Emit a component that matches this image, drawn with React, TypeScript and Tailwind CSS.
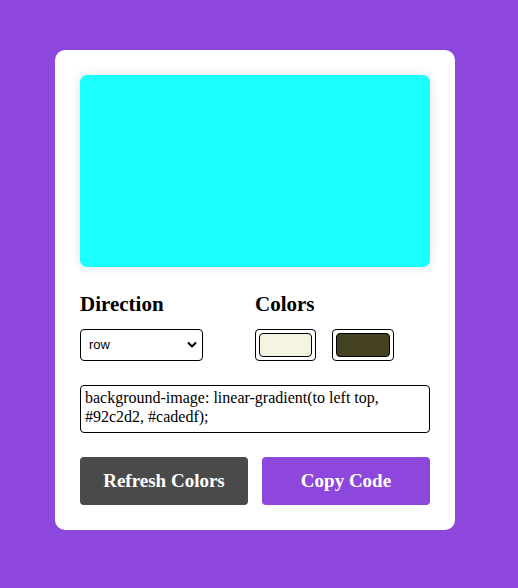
import React, { useState } from "react";

export default function App() {
  const [direction, setDirection] = useState("row");
  const code = "background-image: linear-gradient(to left top, #92c2d2, #cadedf);";

  return (
    <div
      className="min-h-[588px] w-full bg-[#8e47dd] flex justify-center pt-[50px] pr-[8px]"
      style={{ fontFamily: '"Liberation Serif", "Times New Roman", serif' }}
    >
      <div className="w-[400px] h-[480px] bg-white rounded-[10px] p-[25px] flex flex-col">
        <div className="h-[192px] w-full rounded-[7px] bg-[#1cffff] shadow-[0_0_12px_rgba(0,0,0,0.12)]" />

        <div className="mt-[25px] grid grid-cols-[175px_175px]">
          <div>
            <h2 className="text-[21px] font-bold leading-[24px] text-black">Direction</h2>
            <div className="relative mt-[13px] w-[123px] h-[32px]">
              <select
                value={direction}
                onChange={(e) => setDirection(e.target.value)}
                className="appearance-none w-full h-full border border-black rounded-[4px] bg-white pl-[8px] text-[13px] text-black outline-none"
                style={{ fontFamily: '"Liberation Sans", Arial, sans-serif' }}
              >
                <option value="row">row</option>
                <option value="column">column</option>
              </select>
              <svg
                className="absolute right-[6px] top-[12px] pointer-events-none"
                width="10"
                height="8"
                viewBox="0 0 10 8"
              >
                <path d="M1.5 2 L5 5.5 L8.5 2" fill="none" stroke="#000" strokeWidth="2" strokeLinecap="round" strokeLinejoin="round" />
              </svg>
            </div>
          </div>
          <div>
            <h2 className="text-[21px] font-bold leading-[24px] text-black">Colors</h2>
            <div className="mt-[13px] flex gap-[16px]">
              <div className="w-[61px] h-[32px] border border-black rounded-[4px] p-[3px] bg-white">
                <div className="w-full h-full rounded-[4px] border border-black bg-[#f5f4e0]" />
              </div>
              <div className="w-[62px] h-[32px] border border-black rounded-[4px] p-[3px] bg-white">
                <div className="w-full h-full rounded-[4px] border border-black bg-[#434120]" />
              </div>
            </div>
          </div>
        </div>

        <textarea
          readOnly
          value={code}
          className="mt-[24px] w-full h-[48px] resize-none border border-black rounded-[4px] px-[4px] pt-[2px] text-[16px] leading-[19px] text-black outline-none overflow-hidden"
        />

        <div className="mt-[24px] flex gap-[14px]">
          <button className="w-[168px] h-[48px] rounded-[4px] bg-[#4a4a4a] text-white text-[19px] font-bold">
            Refresh Colors
          </button>
          <button className="w-[168px] h-[48px] rounded-[4px] bg-[#8e47dd] text-white text-[19px] font-bold">
            Copy Code
          </button>
        </div>
      </div>
    </div>
  );
}
